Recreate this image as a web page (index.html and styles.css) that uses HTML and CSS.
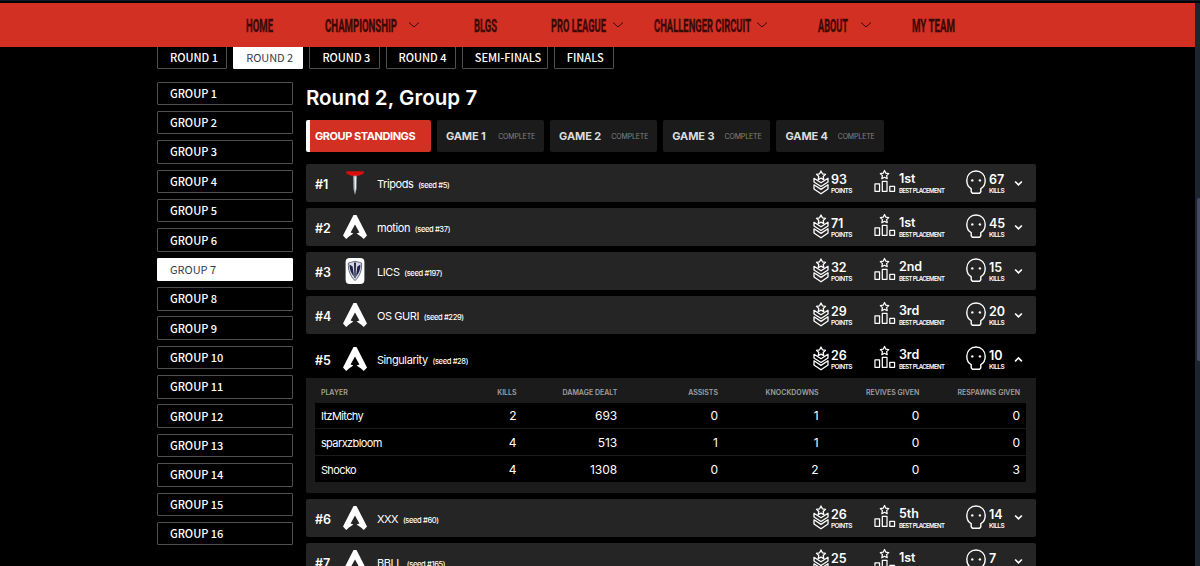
FILE: index.html
```
<!DOCTYPE html>
<html lang="en">
<head>
  <meta charset="UTF-8" />
  <meta name="viewport" content="width=device-width, initial-scale=1.0"/>
  <title>Round 2, Group 7</title>
  <link rel="stylesheet" href="styles.css">
</head>
<body>

  <!-- shared icons -->
  <svg class="sprite">
    <symbol id="i-down" viewBox="0 0 12 8"><path d="M1 1.5 L6 6 L11 1.5" fill="none" stroke="currentColor" stroke-width="1"/></symbol>
    <symbol id="i-open" viewBox="0 0 8 6"><path d="M1 1.2 L4 4.2 L7 1.2" fill="none" stroke="currentColor" stroke-width="1.5"/></symbol>
    <symbol id="i-close" viewBox="0 0 8 6"><path d="M1 4.6 L4 1.6 L7 4.6" fill="none" stroke="currentColor" stroke-width="1.5"/></symbol>
    <symbol id="i-points" viewBox="0 0 16 25">
      <g fill="none" stroke="currentColor" stroke-width="1.3" stroke-linejoin="round">
        <path d="M8 1 L9.4 3.8 L12.5 4.3 L10.2 6.4 L10.8 9.6 L8 8.1 L5.2 9.6 L5.8 6.4 L3.5 4.3 L6.6 3.8 Z"/>
        <path d="M1 8.3 L8 12.8 L15 8.3 V12 L8 16.5 L1 12 Z"/>
        <path d="M1 14.8 L8 19.4 L15 14.8 V19 L8 23.8 L1 19 Z"/>
      </g>
    </symbol>
    <symbol id="i-place" viewBox="0 0 23 25">
      <g fill="none" stroke="currentColor" stroke-width="1.3" stroke-linejoin="round">
        <path d="M11 1 L12.4 3.8 L15.4 4.3 L13.2 6.4 L13.8 9.6 L11 8.1 L8.2 9.6 L8.8 6.4 L6.6 4.3 L9.6 3.8 Z"/>
        <path d="M1 15 H5.8 V22.7 H1 Z M8.7 12.4 H13.6 V22.7 H8.7 Z M16.5 17.7 H21.5 V22.7 H16.5 Z"/>
      </g>
    </symbol>
    <symbol id="i-kills" viewBox="0 0 20 25">
      <path d="M5.2 18.6 C2.6 17.4 .8 14 .8 10.3 C.8 4.9 4.7 1 10 1 C15.3 1 19.2 4.9 19.2 10.3 C19.2 14 17.4 17.4 14.8 18.6 V21.8 L13.6 23.2 H6.4 L5.2 21.8 Z" fill="none" stroke="currentColor" stroke-width="1.4" stroke-linejoin="round"/>
      <circle cx="6.3" cy="10.4" r="1.2" fill="currentColor"/>
      <circle cx="13.9" cy="10.4" r="1.2" fill="currentColor"/>
    </symbol>
    <symbol id="i-apex" viewBox="0 0 24 24">
      <path d="M10.5 0 H13.5 L24 20.6 L20.8 24 L18 21.6 L13.6 18.6 L16.4 17.4 L12 9.6 L7.6 17.4 L10.4 18.6 L6 21.6 L3.2 24 L0 20.6 Z" fill="#fff"/>
    </symbol>
    <symbol id="i-tripods" viewBox="0 0 24 24">
      <path d="M10.2 4 H13.8 L13.5 18 L12 24 L10.5 18 Z" fill="#aeb3b5"/>
      <path d="M11.7 6 H13 V17 L12 20 Z" fill="#eef0f0"/>
      <path d="M3 .2 H21 L20.5 2.8 L16 4.8 H8 L3.6 2.8 Z" fill="#d90d0d"/>
    </symbol>
    <symbol id="i-lics" viewBox="0 0 24 26">
      <rect x="2.6" y="0" width="18.8" height="26" rx="4" fill="#fff"/>
      <path d="M12 3.2 L18.6 5 C19 12 17 18 12 22.6 C7 18 5 12 5.4 5 Z" fill="#d5d7e2" stroke="#444864" stroke-width=".8"/>
      <path d="M6.5 6.5 L9.6 8.4 L11 18.6 C8 15.4 6.6 11.5 6.5 6.5 Z M17.5 6.5 L14.4 8.4 L13 18.6 C16 15.4 17.4 11.5 17.5 6.5 Z M11 4.5 H13 L12.6 20 H11.4 Z" fill="#1d2145"/>
    </symbol>
  </svg>

  <header class="navbar">
    <nav class="menu">
      <a class="nav-home"><svg class="word" width="27" height="22"><text y="18" textLength="27" lengthAdjust="spacingAndGlyphs">HOME</text></svg></a>
      <a class="nav-champ"><svg class="word" width="72" height="22"><text y="18" textLength="72" lengthAdjust="spacingAndGlyphs">CHAMPIONSHIP</text></svg><svg class="caret"><use href="#i-down"/></svg></a>
      <a class="nav-blgs"><svg class="word" width="23" height="22"><text y="18" textLength="23" lengthAdjust="spacingAndGlyphs">BLGS</text></svg></a>
      <a class="nav-pro"><svg class="word" width="55" height="22"><text y="18" textLength="55" lengthAdjust="spacingAndGlyphs">PRO LEAGUE</text></svg><svg class="caret"><use href="#i-down"/></svg></a>
      <a class="nav-circuit"><svg class="word" width="97" height="22"><text y="18" textLength="97" lengthAdjust="spacingAndGlyphs">CHALLENGER CIRCUIT</text></svg><svg class="caret"><use href="#i-down"/></svg></a>
      <a class="nav-about"><svg class="word" width="30" height="22"><text y="18" textLength="30" lengthAdjust="spacingAndGlyphs">ABOUT</text></svg><svg class="caret"><use href="#i-down"/></svg></a>
      <a class="nav-team"><svg class="word" width="43" height="22"><text y="18" textLength="43" lengthAdjust="spacingAndGlyphs">MY TEAM</text></svg></a>
    </nav>
  </header>

  <div class="scrollbar"><div class="thumb"></div></div>

  <main class="page">
    <div class="rounds">
      <a class="pill w70">ROUND 1</a>
      <a class="pill w70 active">ROUND 2</a>
      <a class="pill w70">ROUND 3</a>
      <a class="pill w70">ROUND 4</a>
      <a class="pill w86">SEMI-FINALS</a>
      <a class="pill w60">FINALS</a>
    </div>

    <div class="columns">
      <aside class="groups">
        <a class="pill">GROUP 1</a>
        <a class="pill">GROUP 2</a>
        <a class="pill">GROUP 3</a>
        <a class="pill">GROUP 4</a>
        <a class="pill">GROUP 5</a>
        <a class="pill">GROUP 6</a>
        <a class="pill active">GROUP 7</a>
        <a class="pill">GROUP 8</a>
        <a class="pill">GROUP 9</a>
        <a class="pill">GROUP 10</a>
        <a class="pill">GROUP 11</a>
        <a class="pill">GROUP 12</a>
        <a class="pill">GROUP 13</a>
        <a class="pill">GROUP 14</a>
        <a class="pill">GROUP 15</a>
        <a class="pill">GROUP 16</a>
      </aside>

      <section class="standings">
        <h1>Round 2, Group 7</h1>

        <div class="tabs">
          <a class="tab current">GROUP STANDINGS</a>
          <a class="tab">GAME 1 <small>COMPLETE</small></a>
          <a class="tab">GAME 2 <small>COMPLETE</small></a>
          <a class="tab">GAME 3 <small>COMPLETE</small></a>
          <a class="tab">GAME 4 <small>COMPLETE</small></a>
        </div>

        <div class="team">
          <span class="rank">#1</span><svg class="logo"><use href="#i-tripods"/></svg>
          <span class="name">Tripods <small>(seed #5)</small></span>
          <div class="stat"><svg class="ic-points"><use href="#i-points"/></svg><p><b>93</b><i>POINTS</i></p></div>
          <div class="stat"><svg class="ic-place"><use href="#i-place"/></svg><p><b>1st</b><i class="long">BEST PLACEMENT</i></p></div>
          <div class="stat"><svg class="ic-kills"><use href="#i-kills"/></svg><p><b>67</b><i>KILLS</i></p></div>
          <svg class="toggle"><use href="#i-open"/></svg>
        </div>

        <div class="team">
          <span class="rank">#2</span><svg class="logo"><use href="#i-apex"/></svg>
          <span class="name">motion <small>(seed #37)</small></span>
          <div class="stat"><svg class="ic-points"><use href="#i-points"/></svg><p><b>71</b><i>POINTS</i></p></div>
          <div class="stat"><svg class="ic-place"><use href="#i-place"/></svg><p><b>1st</b><i class="long">BEST PLACEMENT</i></p></div>
          <div class="stat"><svg class="ic-kills"><use href="#i-kills"/></svg><p><b>45</b><i>KILLS</i></p></div>
          <svg class="toggle"><use href="#i-open"/></svg>
        </div>

        <div class="team">
          <span class="rank">#3</span><svg class="logo"><use href="#i-lics"/></svg>
          <span class="name">LICS <small>(seed #197)</small></span>
          <div class="stat"><svg class="ic-points"><use href="#i-points"/></svg><p><b>32</b><i>POINTS</i></p></div>
          <div class="stat"><svg class="ic-place"><use href="#i-place"/></svg><p><b>2nd</b><i class="long">BEST PLACEMENT</i></p></div>
          <div class="stat"><svg class="ic-kills"><use href="#i-kills"/></svg><p><b>15</b><i>KILLS</i></p></div>
          <svg class="toggle"><use href="#i-open"/></svg>
        </div>

        <div class="team">
          <span class="rank">#4</span><svg class="logo"><use href="#i-apex"/></svg>
          <span class="name">OS GURI <small>(seed #229)</small></span>
          <div class="stat"><svg class="ic-points"><use href="#i-points"/></svg><p><b>29</b><i>POINTS</i></p></div>
          <div class="stat"><svg class="ic-place"><use href="#i-place"/></svg><p><b>3rd</b><i class="long">BEST PLACEMENT</i></p></div>
          <div class="stat"><svg class="ic-kills"><use href="#i-kills"/></svg><p><b>20</b><i>KILLS</i></p></div>
          <svg class="toggle"><use href="#i-open"/></svg>
        </div>

        <div class="team expanded">
          <span class="rank">#5</span><svg class="logo"><use href="#i-apex"/></svg>
          <span class="name">Singularity <small>(seed #28)</small></span>
          <div class="stat"><svg class="ic-points"><use href="#i-points"/></svg><p><b>26</b><i>POINTS</i></p></div>
          <div class="stat"><svg class="ic-place"><use href="#i-place"/></svg><p><b>3rd</b><i class="long">BEST PLACEMENT</i></p></div>
          <div class="stat"><svg class="ic-kills"><use href="#i-kills"/></svg><p><b>10</b><i>KILLS</i></p></div>
          <svg class="toggle"><use href="#i-close"/></svg>
        </div>
        <div class="players">
          <div class="line head"><span>PLAYER</span><span>KILLS</span><span>DAMAGE DEALT</span><span>ASSISTS</span><span>KNOCKDOWNS</span><span>REVIVES GIVEN</span><span>RESPAWNS GIVEN</span></div>
          <div class="line"><span>ItzMitchy</span><span>2</span><span>693</span><span>0</span><span>1</span><span>0</span><span>0</span></div>
          <div class="line"><span>sparxzbloom</span><span>4</span><span>513</span><span>1</span><span>1</span><span>0</span><span>0</span></div>
          <div class="line"><span>Shocko</span><span>4</span><span>1308</span><span>0</span><span>2</span><span>0</span><span>3</span></div>
        </div>

        <div class="team">
          <span class="rank">#6</span><svg class="logo"><use href="#i-apex"/></svg>
          <span class="name">XXX <small>(seed #60)</small></span>
          <div class="stat"><svg class="ic-points"><use href="#i-points"/></svg><p><b>26</b><i>POINTS</i></p></div>
          <div class="stat"><svg class="ic-place"><use href="#i-place"/></svg><p><b>5th</b><i class="long">BEST PLACEMENT</i></p></div>
          <div class="stat"><svg class="ic-kills"><use href="#i-kills"/></svg><p><b>14</b><i>KILLS</i></p></div>
          <svg class="toggle"><use href="#i-open"/></svg>
        </div>

        <div class="team">
          <span class="rank">#7</span><svg class="logo"><use href="#i-apex"/></svg>
          <span class="name">BBLL <small>(seed #165)</small></span>
          <div class="stat"><svg class="ic-points"><use href="#i-points"/></svg><p><b>25</b><i>POINTS</i></p></div>
          <div class="stat"><svg class="ic-place"><use href="#i-place"/></svg><p><b>1st</b><i class="long">BEST PLACEMENT</i></p></div>
          <div class="stat"><svg class="ic-kills"><use href="#i-kills"/></svg><p><b>7</b><i>KILLS</i></p></div>
          <svg class="toggle"><use href="#i-open"/></svg>
        </div>
      </section>
    </div>
  </main>

</body>
</html>
```
FILE: styles.css
```
* {
  box-sizing: border-box;
}

body {
  margin: 0;
  height: 566px;
  overflow: hidden;
  background: #000;
  color: #fff;
  font-family: Inter, "Liberation Sans", sans-serif;
}

.sprite {
  display: none;
}

/* top bar */
.navbar {
  height: 47px;
  padding-top: 2px;
  border-top: 1px solid #101b29;
  background: linear-gradient(#000 2px, #d13023 2px);
}

.menu {
  display: flex;
  height: 44px;
  padding-left: 246px;
  color: #3a0805;
}

.menu a {
  display: flex;
  align-items: center;
  justify-content: space-between;
  flex: none;
}

.word {
  overflow: visible;
  font: bold 19px "Roboto", "Liberation Sans Narrow", sans-serif;
  fill: currentColor;
  stroke: currentColor;
  stroke-width: 0.3;
}

.caret {
  width: 12px;
  height: 8px;
}

.nav-home { width: 27px; }
.nav-champ { width: 95px; margin-left: 52px; }
.nav-blgs { width: 23px; margin-left: 54px; }
.nav-pro { width: 73px; margin-left: 54px; }
.nav-circuit { width: 114px; margin-left: 30px; }
.nav-about { width: 54px; margin-left: 50px; }
.nav-team { width: 43px; margin-left: 40px; }

/* browser scrollbar, sits over the page edge */
.scrollbar {
  position: fixed;
  top: 3px;
  right: 0;
  bottom: 0;
  width: 5px;
  padding: 195px 0 0 2px;
  background: #1e2430;
}

.thumb {
  height: 163px;
  border-radius: 2px 0 0 2px;
  background: #464a63;
}

.page {
  width: 879px;
  margin-left: 157px;
}

.rounds {
  display: flex;
  gap: 6px;
  height: 22px;
  align-items: flex-end;
  overflow: hidden;
}

.pill {
  display: flex;
  align-items: center;
  flex: none;
  height: 23.5px;
  padding: 0 0 1px 12px;
  border: 1px solid #505050;
  border-radius: 1px;
  font: 500 11px "Noto Sans CJK SC", sans-serif;
  letter-spacing: -0.03px;
}

.pill.active {
  background: #fff;
  border-color: #fff;
  color: #333b4a;
  font-weight: 400;
}

.w70 { width: 70.2px; }
.w86 { width: 86px; }
.w60 { width: 60px; }

.columns {
  display: flex;
  gap: 12.5px;
  padding-top: 12.5px;
}

.groups {
  display: flex;
  flex-direction: column;
  gap: 5.87px;
  width: 136.4px;
}

.standings {
  width: 730px;
}

h1 {
  margin: 4px 0 10px;
  height: 24.5px;
  font-size: 20.5px;
  font-weight: 600;
  line-height: 24.5px;
  letter-spacing: 0.05px;
}

.tabs {
  display: flex;
  gap: 6px;
  margin-bottom: 12px;
}

.tab {
  display: flex;
  align-items: center;
  justify-content: space-between;
  width: 107.2px;
  height: 32px;
  padding: 0 9px;
  border-radius: 2px;
  background: #1b1b1b;
  color: #ddd;
  font-size: 11px;
  font-weight: 700;
  letter-spacing: -0.1px;
}

.tab small {
  padding-top: 1px;
  color: #848484;
  font-size: 7px;
  font-weight: 400;
  letter-spacing: -0.15px;
}

.tab.current {
  width: 125px;
  padding-left: 5px;
  border-left: 4px solid #fff;
  background: #d13023;
  color: #fff;
  letter-spacing: -0.43px;
}

/* team rows */
.team {
  display: grid;
  grid-template-columns: 28px 34px 436px 61px 92px 48.5px 9px;
  align-items: center;
  height: 38px;
  margin-bottom: 6px;
  padding-left: 9px;
  border-radius: 2px;
  background: #252525;
}

.team.expanded {
  margin-bottom: 0;
  background: #000;
}

.rank {
  padding-top: 3px;
  font-size: 12.5px;
  font-weight: 600;
}

.logo {
  width: 24px;
  height: 26px;
}

.name {
  padding-top: 2px;
  font-size: 11px;
  letter-spacing: -0.4px;
}

.name small {
  margin-left: 2px;
  font-size: 7.5px;
  font-weight: 500;
  letter-spacing: -0.35px;
}

.stat {
  display: flex;
  gap: 3px;
  padding-bottom: 1px;
}

.stat svg {
  flex: none;
  height: 25px;
}

.ic-points { width: 16px; }
.ic-place { width: 22px; }
.ic-kills { width: 20px; }

.stat .ic-points {
  margin-right: -1px;
}

.stat p {
  display: flex;
  flex-direction: column;
  margin: 2px 0 0;
  white-space: nowrap;
}

.stat b {
  font-size: 12.5px;
  font-weight: 600;
  line-height: 15px;
}

.stat i {
  font-size: 6.5px;
  font-style: normal;
  font-weight: 600;
  line-height: 8px;
  letter-spacing: -0.55px;
}

.stat .long {
  font-size: 6px;
  line-height: 10px;
  letter-spacing: -0.62px;
}

.toggle {
  width: 9px;
  height: 7px;
}

/* player breakdown */
.players {
  height: 114.5px;
  margin-bottom: 6px;
  padding: 4px 9.5px 0 9px;
  border-radius: 0 0 2px 2px;
  background: #1b1b1b;
}

.line {
  display: grid;
  grid-template-columns: 95px repeat(6, 100.7px);
  align-items: center;
  height: 25.3px;
  margin-bottom: 1.7px;
  padding: 1px 0 0 6px;
  background: #000;
  font-size: 11px;
  letter-spacing: -0.6px;
}

.line span + span {
  text-align: right;
  font-size: 12px;
  letter-spacing: 0;
}

.line.head {
  height: 20.5px;
  margin-bottom: 0;
  padding-top: 0;
  background: none;
  color: #a0a0a0;
}

.line.head span {
  font-size: 7px;
  font-weight: 600;
  letter-spacing: 0;
}
```
